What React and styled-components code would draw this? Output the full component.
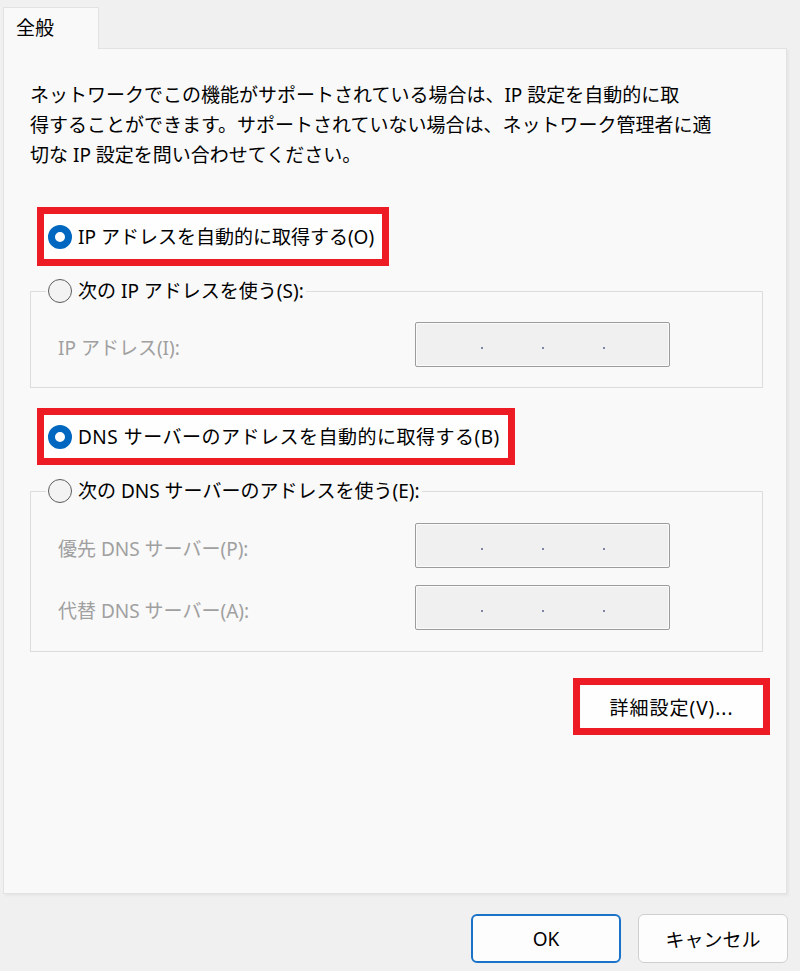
import React from "react";
import styled, { createGlobalStyle } from "styled-components";

const GlobalStyle = createGlobalStyle`
  html, body {
    margin: 0;
    background: #f0f0f0;
  }
  body {
    font-family: "Noto Sans", "Noto Sans CJK JP", sans-serif;
    color: #000;
  }
  * {
    box-sizing: border-box;
  }
`;

function App() {
  return (
    <Page>
      <GlobalStyle />
      <Tab>全般</Tab>
      <Panel>
        <Description>
          ネットワークでこの機能がサポートされている場合は、IP 設定を自動的に取
          <br />
          得することができます。サポートされていない場合は、ネットワーク管理者に適
          <br />
          切な IP 設定を問い合わせてください。
        </Description>

        <Highlight $top={37} $height={59}>
          <RadioRow>
            <Radio $checked />
            IP アドレスを自動的に取得する(O)
          </RadioRow>
        </Highlight>

        <Group $top={12} $pad="18px 0 20px 0">
          <Legend>
            <RadioRow>
              <Radio />
              次の IP アドレスを使う(S):
            </RadioRow>
          </Legend>
          <FieldRow>
            <FieldLabel>IP アドレス(I):</FieldLabel>
            <AddressBox />
          </FieldRow>
        </Group>

        <Highlight $top={20} $height={57}>
          <RadioRow $wide>
            <Radio $checked />
            DNS サーバーのアドレスを自動的に取得する(B)
          </RadioRow>
        </Highlight>

        <Group $top={13} $pad="19px 0 21px 0">
          <Legend>
            <RadioRow>
              <Radio />
              次の DNS サーバーのアドレスを使う(E):
            </RadioRow>
          </Legend>
          <FieldRow>
            <FieldLabel>優先 DNS サーバー(P):</FieldLabel>
            <AddressBox />
          </FieldRow>
          <FieldRow $gap={17}>
            <FieldLabel>代替 DNS サーバー(A):</FieldLabel>
            <AddressBox />
          </FieldRow>
        </Group>

        <AdvancedHighlight>
          <AdvancedButton>詳細設定(V)...</AdvancedButton>
        </AdvancedHighlight>
      </Panel>

      <Footer>
        <DialogButton $primary>OK</DialogButton>
        <DialogButton>キャンセル</DialogButton>
      </Footer>
    </Page>
  );
}

function AddressBox() {
  return (
    <AddressField>
      <Dot />
      <Dot />
      <Dot />
    </AddressField>
  );
}

export default App;

const Page = styled.div`
  width: 800px;
  height: 971px;
  padding-top: 7px;
  overflow: hidden;
`;

const Tab = styled.div`
  position: relative;
  z-index: 1;
  margin-left: 3px;
  margin-bottom: -1px;
  width: 96px;
  height: 42px;
  padding: 6px 0 0 12px;
  background: #f9f9f9;
  border: 1px solid #e2e2e2;
  border-bottom: none;
  font-size: 19px;
  line-height: 28px;
`;

const Panel = styled.div`
  display: flex;
  flex-direction: column;
  align-items: flex-start;
  margin-left: 3px;
  width: 784px;
  height: 846px;
  padding-top: 31px;
  background: #f9f9f9;
  border: 1px solid #e2e2e2;
  box-shadow: 2px 2px 2px rgba(0, 0, 0, 0.04);
`;

const Description = styled.p`
  margin: 0 0 0 26px;
  font-size: 19px;
  line-height: 30px;
  white-space: nowrap;
`;

const Highlight = styled.div`
  display: flex;
  align-items: center;
  margin: ${(p) => p.$top}px 0 0 33px;
  height: ${(p) => p.$height}px;
  padding: 0 8px 0 4px;
  border: 7px solid #ed1c24;
  background: #fefefe;
`;

const RadioRow = styled.span`
  display: flex;
  align-items: center;
  gap: 6px;
  font-size: 19px;
  line-height: 26px;
  white-space: nowrap;
  letter-spacing: ${(p) => (p.$wide ? "0.5px" : "0")};
`;

const Radio = styled.span`
  flex: none;
  width: 24px;
  height: 24px;
  border-radius: 50%;
  background: ${(p) => (p.$checked ? "#fff" : "#f3f3f3")};
  border: ${(p) => (p.$checked ? "7px solid #0067c0" : "1.5px solid #5c5c5c")};
`;

const Group = styled.fieldset`
  margin: ${(p) => p.$top}px 0 0 26px;
  width: 733px;
  padding: ${(p) => p.$pad};
  border: 1px solid #dcdcdc;
  min-width: 0;
`;

const Legend = styled.legend`
  margin-left: 15px;
  padding: 0 2px;
`;

const FieldRow = styled.div`
  display: grid;
  grid-template-columns: 357px 255px;
  align-items: center;
  margin-top: ${(p) => p.$gap || 0}px;
  padding-left: 27px;
`;

const FieldLabel = styled.span`
  font-size: 19px;
  line-height: 26px;
  color: #a0a0a0;
  padding-top: 6px;
  white-space: nowrap;
`;

const AddressField = styled.div`
  display: flex;
  justify-content: center;
  align-items: flex-end;
  gap: 59px;
  height: 45px;
  padding-bottom: 17px;
  background: #f0f0f0;
  border: 1px solid #9c9c9c;
  border-radius: 2px;
  box-shadow: inset 0 0 0 1px #fbfbfb;
`;

const Dot = styled.span`
  width: 2px;
  height: 2px;
  background: #7f86a3;
`;

const AdvancedHighlight = styled.div`
  align-self: flex-end;
  margin: 26px 16px 0 0;
  width: 197px;
  height: 57px;
  padding: 0 1px;
  border: 7px solid #ed1c24;
  display: flex;
  align-items: center;
`;

const AdvancedButton = styled.div`
  width: 100%;
  height: 42px;
  display: flex;
  align-items: center;
  justify-content: center;
  background: #fefefe;
  border-radius: 3px;
  font-size: 19px;
  letter-spacing: 1px;
`;

const Footer = styled.div`
  display: flex;
  justify-content: flex-end;
  gap: 17px;
  margin-top: 20px;
  padding-right: 12px;
`;

const DialogButton = styled.div`
  width: 150px;
  height: 49px;
  display: flex;
  align-items: center;
  justify-content: center;
  background: #fdfdfd;
  border: ${(p) => (p.$primary ? "2px solid #1a73c8" : "1px solid #cfcfcf")};
  border-radius: 6px;
  font-size: 19px;
`;
